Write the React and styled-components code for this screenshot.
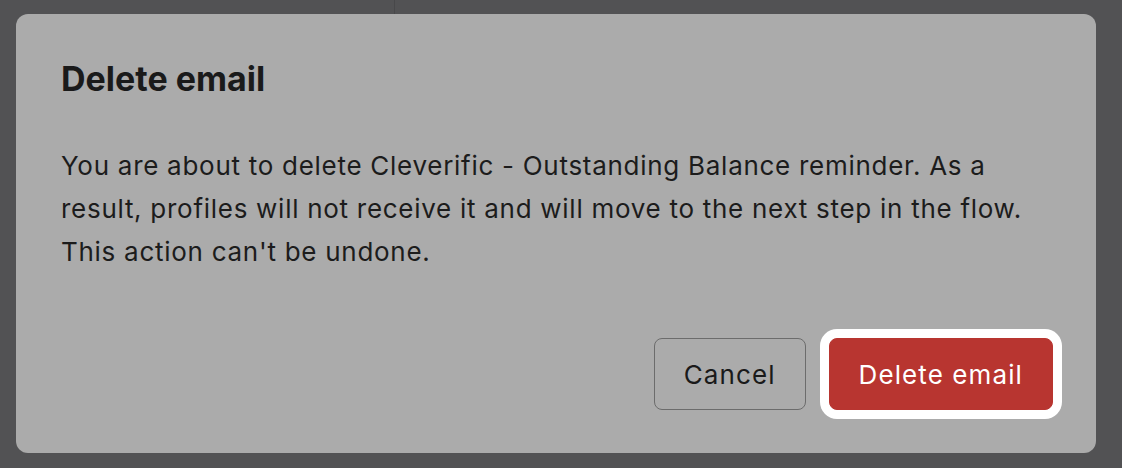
import styled, { createGlobalStyle } from "styled-components";

const Global = createGlobalStyle`
  html, body {
    margin: 0;
    padding: 0;
    background: #525254;
  }
  body {
    font-family: Inter, "Noto Sans", sans-serif;
    -webkit-font-smoothing: antialiased;
  }
`;

const Screen = styled.div`
  width: 1122px;
  height: 468px;
  box-sizing: border-box;
  padding: 14px 26px 15px 16px;
  position: relative;
  overflow: hidden;
`;

const Divider = styled.div`
  position: absolute;
  left: 394px;
  top: 0;
  width: 1px;
  height: 14px;
  background: #48484a;
`;

const Dialog = styled.div`
  height: 100%;
  box-sizing: border-box;
  background: #ababab;
  border-radius: 12px;
  padding: 45px 43px 43px 45px;
  display: flex;
  flex-direction: column;
`;

const Title = styled.h2`
  margin: 0;
  font-size: 34px;
  font-weight: 700;
  line-height: 40px;
  color: #1a1a1a;
`;

const Message = styled.p`
  margin: 45px 0 0;
  font-size: 26px;
  line-height: 43px;
  letter-spacing: 0.72px;
  color: #1c1c1c;
`;

const Actions = styled.div`
  margin-top: auto;
  display: flex;
  justify-content: flex-end;
  align-items: center;
  gap: 23px;
`;

const Button = styled.button`
  height: 72px;
  box-sizing: border-box;
  padding: 0 29px;
  border-radius: 8px;
  font-family: inherit;
  font-size: 26px;
  letter-spacing: 1.1px;
  cursor: pointer;
  border: 1px solid ${(p) => (p.$danger ? "#b83530" : "#6c6c6c")};
  background: ${(p) => (p.$danger ? "#b83530" : "transparent")};
  color: ${(p) => (p.$danger ? "#ffffff" : "#1a1a1a")};
  box-shadow: ${(p) => (p.$danger ? "0 0 0 9px #ffffff" : "none")};
`;

export default function App() {
  return (
    <>
      <Global />
      <Screen>
        <Divider />
        <Dialog>
          <Title>Delete email</Title>
          <Message>
            You are about to delete Cleverific - Outstanding Balance reminder.
            As a result, profiles will not receive it and will move to the next
            step in the flow. This action can't be undone.
          </Message>
          <Actions>
            <Button>Cancel</Button>
            <Button $danger>Delete email</Button>
          </Actions>
        </Dialog>
      </Screen>
    </>
  );
}
